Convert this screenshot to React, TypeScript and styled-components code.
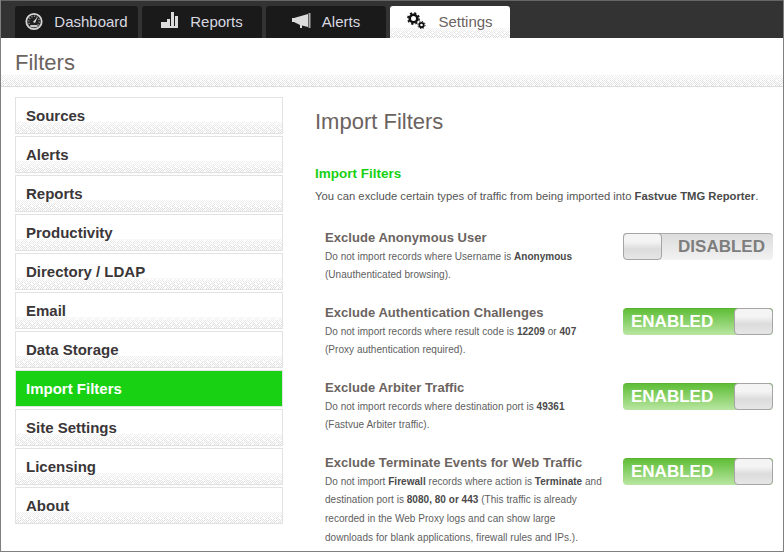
import React from 'react';
import styled, { createGlobalStyle } from 'styled-components';

const GlobalStyle = createGlobalStyle`
  html, body {
    margin: 0;
    padding: 0;
    background: #fff;
  }
  body {
    font-family: "Liberation Sans", Arial, sans-serif;
  }
`;

// irregular 8x8 dither tile, one character per pixel
const DITHER_ROWS = [
  '10101010',
  '01010001',
  '10100010',
  '01010101',
  '10001010',
  '01010100',
  '00101010',
  '01000101',
];

const ditherRects = DITHER_ROWS.map((row, y) =>
  row
    .split('')
    .map((cell, x) => (cell === '1' ? `<rect x='${x}' y='${y}' width='1' height='1'/>` : ''))
    .join(''),
).join('');

const ditherTile = encodeURIComponent(
  `<svg xmlns='http://www.w3.org/2000/svg' width='8' height='8' shape-rendering='crispEdges' fill='#e0e0e0'>${ditherRects}</svg>`,
);

// soft dithered band used along the bottom of panels and tabs
const ditherBand = (height: number) => `
  content: '';
  position: absolute;
  left: 0;
  right: 0;
  bottom: 0;
  height: ${height}px;
  background: url("data:image/svg+xml,${ditherTile}") 0 0 / 8px 8px;
  mask-image: linear-gradient(rgba(0, 0, 0, 0.4), #000 70%);
`;

const Window = styled.div`
  width: 784px;
  height: 552px;
  box-sizing: border-box;
  overflow: hidden;
  border-left: 1px solid #7f7f7f;
  border-right: 1px solid #7f7f7f;
  border-bottom: 1px solid #7f7f7f;
  display: flex;
  flex-direction: column;
`;

const TopBar = styled.div`
  height: 38px;
  flex: none;
  box-sizing: border-box;
  background: #333;
  border-top: 1px solid #666;
  padding: 5px 0 0 15px;
  margin: 0 -1px;
  display: flex;
  gap: 4px;
`;

const Tab = styled.div<{ $active?: boolean; $width: number }>`
  position: relative;
  width: ${(p) => p.$width}px;
  height: 32px;
  box-sizing: border-box;
  border-radius: 3px 3px 0 0;
  background: ${(p) => (p.$active ? '#fff' : '#1a1a1a')};
  color: ${(p) => (p.$active ? '#6b6360' : '#d8d8e0')};
  font-size: 15px;
  display: flex;
  align-items: center;
  justify-content: center;
  gap: 11px;
  overflow: hidden;

  ${(p) => p.$active && `&::after { ${ditherBand(10)} }`}

  svg {
    position: relative;
    z-index: 1;
  }
`;

const TabLabel = styled.span`
  position: relative;
  z-index: 1;
  margin-bottom: 2px;
`;

const Header = styled.div`
  height: 49px;
  flex: none;
  box-sizing: border-box;
  padding: 11px 0 0 14px;
  font-size: 22px;
  line-height: 28px;
  color: #6b6360;
  position: relative;
  border-bottom: 1px solid #ddd;

  &::after {
    ${ditherBand(11)}
  }
`;

const HeaderTitle = styled.span`
  position: relative;
  z-index: 1;
`;

const Body = styled.div`
  flex: 1;
  display: flex;
  padding: 10px 10px 0 14px;
  gap: 32px;
  min-height: 0;
`;

const Sidebar = styled.nav`
  width: 268px;
  flex: none;
  display: flex;
  flex-direction: column;
  gap: 2px;
`;

const NavItem = styled.div<{ $active?: boolean }>`
  position: relative;
  height: 37px;
  box-sizing: border-box;
  border: 1px solid #e2e2e2;
  padding-left: 10px;
  line-height: 35px;
  font-size: 15px;
  font-weight: bold;
  color: ${(p) => (p.$active ? '#fff' : '#3b3638')};
  background: ${(p) => (p.$active ? '#17d112' : '#fff')};
  overflow: hidden;

  ${(p) => !p.$active && `&::after { ${ditherBand(11)} }`}
`;

const NavLabel = styled.span`
  position: relative;
  z-index: 1;
`;

const Main = styled.main`
  flex: 1;
  min-width: 0;
`;

const PageTitle = styled.h1`
  margin: 11px 0 0;
  font-size: 22px;
  line-height: 28px;
  font-weight: normal;
  color: #6b6360;
`;

const SectionTitle = styled.h2`
  margin: 29px 0 0;
  font-size: 13.5px;
  line-height: 18px;
  font-weight: bold;
  color: #17d112;
`;

const Intro = styled.p`
  margin: 5px 0 0;
  font-size: 11.25px;
  line-height: 16px;
  color: #555;

  b {
    color: #4a4a4a;
  }
`;

const FilterList = styled.div`
  margin-top: 24px;
  padding-left: 10px;
  display: flex;
  flex-direction: column;
  gap: 18px;
`;

const FilterRow = styled.div`
  display: flex;
  justify-content: space-between;
  align-items: flex-start;
`;

const FilterText = styled.div`
  width: 285px;
`;

const FilterTitle = styled.div`
  font-size: 13px;
  line-height: 19.6px;
  font-weight: bold;
  letter-spacing: 0.05px;
  color: #6b6360;
`;

const FilterDesc = styled.div`
  font-size: 10px;
  line-height: 18.7px;
  letter-spacing: 0.03px;
  color: #606060;

  b {
    color: #4a4a4a;
  }
`;

const Toggle = styled.div<{ $on: boolean }>`
  position: relative;
  width: 150px;
  height: 27px;
  flex: none;
  margin-top: 5px;
  box-sizing: border-box;
  border-radius: 4px;
  border-top: 1px solid ${(p) => (p.$on ? '#5cb030' : '#aaa')};
  background: ${(p) =>
    p.$on
      ? 'linear-gradient(#5fbe37, #b9e6a2)'
      : 'linear-gradient(#dcdcdc, #f2f2f2)'};
  color: ${(p) => (p.$on ? '#fff' : '#7d7d7d')};
  font-size: 17px;
  font-weight: bold;
  line-height: 25px;
  text-align: ${(p) => (p.$on ? 'left' : 'right')};
  padding: 0 8px;
`;

const Knob = styled.span<{ $on: boolean }>`
  position: absolute;
  top: -1px;
  ${(p) => (p.$on ? 'right: 0;' : 'left: 0;')}
  width: 39px;
  height: 27px;
  box-sizing: border-box;
  border: 1px solid #a5a5a5;
  border-radius: 4px;
  background: linear-gradient(#f4f4f4, #f4f4f4 30%, #dcdcdc 60%, #e6e6e6);
`;

const GaugeIcon = () => (
  <svg width="18" height="20" viewBox="0 0 18 20">
    <circle cx="9" cy="9.5" r="7.7" fill="#222" stroke="#d6d6d6" strokeWidth="1.8" />
    <circle cx="9" cy="9.5" r="5.3" fill="none" stroke="#8a8a8a" strokeWidth="1.6" strokeDasharray="1.2 1.5" />
    <path d="M8 10 L12.5 5 L10 11 Z" fill="#e6e6e6" />
    <rect x="5.5" y="13" width="7" height="2.2" fill="#c8c8c8" />
  </svg>
);

const BarsIcon = () => (
  <svg width="18" height="20" viewBox="0 0 18 20" fill="#dcdcdc">
    <rect x="0" y="10" width="6" height="6" />
    <rect x="6" y="7" width="3" height="9" />
    <rect x="10" y="0" width="3" height="16" />
    <rect x="14" y="4" width="3" height="12" />
    <rect x="0" y="14" width="17" height="2" />
  </svg>
);

const MegaphoneIcon = () => (
  <svg width="19" height="20" viewBox="0 0 19 20" fill="#dcdcdc">
    <path d="M0 6 L2 6 L16 2 L16 15 L10 13.5 L10 16 L8 16 L8 13 L2 10 L0 10 Z" />
    <rect x="16.5" y="1" width="2" height="15" fill="#aaa" />
  </svg>
);

const GearsIcon = () => (
  <svg width="20" height="20" viewBox="0 0 20 20">
    <circle cx="6.5" cy="6.5" r="3.8" fill="none" stroke="#111" strokeWidth="2.6" />
    <circle cx="6.5" cy="6.5" r="5.6" fill="none" stroke="#111" strokeWidth="1.6" strokeDasharray="2.2 2.2" />
    <circle cx="14.5" cy="13" r="2.2" fill="none" stroke="#111" strokeWidth="1.8" />
    <circle cx="14.5" cy="13" r="3.6" fill="none" stroke="#111" strokeWidth="1" strokeDasharray="1.4 1.4" />
  </svg>
);

const navItems = [
  'Sources',
  'Alerts',
  'Reports',
  'Productivity',
  'Directory / LDAP',
  'Email',
  'Data Storage',
  'Import Filters',
  'Site Settings',
  'Licensing',
  'About',
];

const Switch = ({ on }: { on: boolean }) => (
  <Toggle $on={on}>
    {on ? 'ENABLED' : 'DISABLED'}
    <Knob $on={on} />
  </Toggle>
);

const App = () => (
  <Window>
    <GlobalStyle />
    <TopBar>
      <Tab $width={123}>
        <GaugeIcon />
        <TabLabel>Dashboard</TabLabel>
      </Tab>
      <Tab $width={120}>
        <BarsIcon />
        <TabLabel>Reports</TabLabel>
      </Tab>
      <Tab $width={120}>
        <MegaphoneIcon />
        <TabLabel>Alerts</TabLabel>
      </Tab>
      <Tab $width={120} $active>
        <GearsIcon />
        <TabLabel>Settings</TabLabel>
      </Tab>
    </TopBar>
    <Header>
      <HeaderTitle>Filters</HeaderTitle>
    </Header>
    <Body>
      <Sidebar>
        {navItems.map((item) => (
          <NavItem key={item} $active={item === 'Import Filters'}>
            <NavLabel>{item}</NavLabel>
          </NavItem>
        ))}
      </Sidebar>
      <Main>
        <PageTitle>Import Filters</PageTitle>
        <SectionTitle>Import Filters</SectionTitle>
        <Intro>
          You can exclude certain types of traffic from being imported into <b>Fastvue TMG Reporter</b>.
        </Intro>
        <FilterList>
          <FilterRow>
            <FilterText>
              <FilterTitle>Exclude Anonymous User</FilterTitle>
              <FilterDesc>
                Do not import records where Username is <b>Anonymous</b>
                <br />
                (Unauthenticated browsing).
              </FilterDesc>
            </FilterText>
            <Switch on={false} />
          </FilterRow>
          <FilterRow>
            <FilterText>
              <FilterTitle>Exclude Authentication Challenges</FilterTitle>
              <FilterDesc>
                Do not import records where result code is <b>12209</b> or <b>407</b>
                <br />
                (Proxy authentication required).
              </FilterDesc>
            </FilterText>
            <Switch on />
          </FilterRow>
          <FilterRow>
            <FilterText>
              <FilterTitle>Exclude Arbiter Traffic</FilterTitle>
              <FilterDesc>
                Do not import records where destination port is <b>49361</b>
                <br />
                (Fastvue Arbiter traffic).
              </FilterDesc>
            </FilterText>
            <Switch on />
          </FilterRow>
          <FilterRow>
            <FilterText>
              <FilterTitle>Exclude Terminate Events for Web Traffic</FilterTitle>
              <FilterDesc>
                Do not import <b>Firewall</b> records where action is <b>Terminate</b> and
                <br />
                destination port is <b>8080, 80 or 443</b> (This traffic is already
                <br />
                recorded in the Web Proxy logs and can show large
                <br />
                downloads for blank applications, firewall rules and IPs.).
              </FilterDesc>
            </FilterText>
            <Switch on />
          </FilterRow>
        </FilterList>
      </Main>
    </Body>
  </Window>
);

export default App;
